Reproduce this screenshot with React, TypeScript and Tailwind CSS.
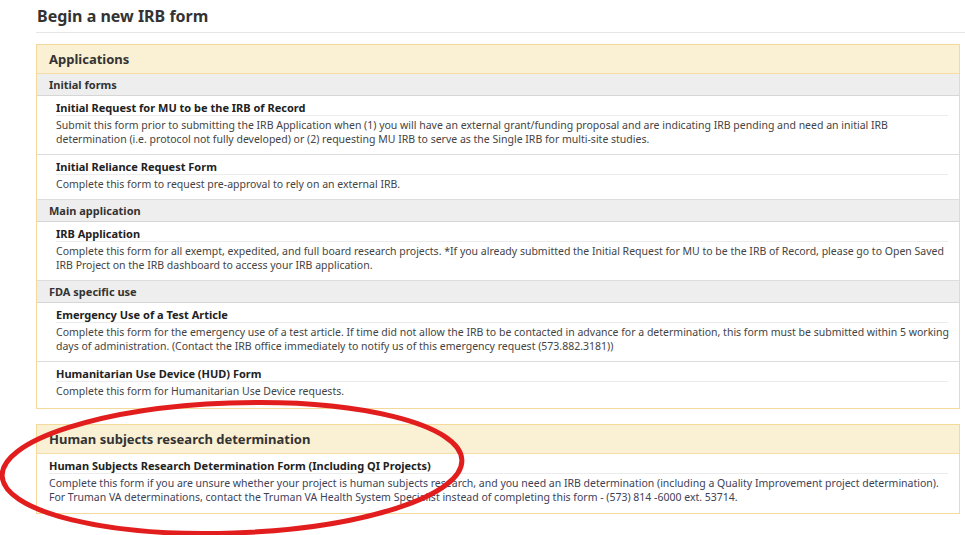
import React from "react";

type Item = { title: string; desc: React.ReactNode; last?: boolean };

function SubHeader({ children }: { children: React.ReactNode }) {
  return (
    <div className="h-[22px] bg-[#eeeeee] border-b border-[#d6d6d6] pl-[12px] text-[11px] font-bold leading-[21px] text-[#333]">
      {children}
    </div>
  );
}

function FormItem({ title, desc, last }: Item) {
  return (
    <div className={`pl-[19px] pr-[11px] pt-[5px] ${last ? "pb-[10px]" : "pb-[8px] border-b border-[#dddddd]"}`}>
      <div className="text-[11px] font-bold leading-[14px] text-[#222] border-b border-[#ececec]">{title}</div>
      <div className="mt-[2px] mr-[-6px] text-[10.5px] leading-[14px] text-[#444]">{desc}</div>
    </div>
  );
}

export default function App() {
  return (
    <div className="relative w-[965px] h-[535px] overflow-hidden bg-white font-['Noto_Sans','Open_Sans',sans-serif] text-[#333]">
      <div className="pl-[36px]">
        <h1 className="pl-[1px] pt-[6px] pb-[6px] text-[16px] font-bold leading-[20px] text-[#333] border-b border-[#e6e6e6]">
          Begin a new IRB form
        </h1>

        <div className="mt-[11px] mr-[5px] border border-[#f4da9a]">
          <div className="h-[29px] bg-[#faf0d3] border-b border-[#f4dea6] pl-[12px] text-[13px] font-bold leading-[28px] text-[#333]">
            Applications
          </div>
          <SubHeader>Initial forms</SubHeader>
          <FormItem
            title="Initial Request for MU to be the IRB of Record"
            desc="Submit this form prior to submitting the IRB Application when (1) you will have an external grant/funding proposal and are indicating IRB pending and need an initial IRB determination (i.e. protocol not fully developed) or (2) requesting MU IRB to serve as the Single IRB for multi-site studies."
          />
          <FormItem
            title="Initial Reliance Request Form"
            desc="Complete this form to request pre-approval to rely on an external IRB."
          />
          <SubHeader>Main application</SubHeader>
          <FormItem
            title="IRB Application"
            desc="Complete this form for all exempt, expedited, and full board research projects. *If you already submitted the Initial Request for MU to be the IRB of Record, please go to Open Saved IRB Project on the IRB dashboard to access your IRB application."
          />
          <SubHeader>FDA specific use</SubHeader>
          <FormItem
            title="Emergency Use of a Test Article"
            desc="Complete this form for the emergency use of a test article. If time did not allow the IRB to be contacted in advance for a determination, this form must be submitted within 5 working days of administration. (Contact the IRB office immediately to notify us of this emergency request (573.882.3181))"
          />
          <FormItem
            title="Humanitarian Use Device (HUD) Form"
            desc="Complete this form for Humanitarian Use Device requests."
            last
          />
        </div>

        <div className="mt-[15px] mr-[5px] border border-[#f4da9a]">
          <div className="h-[29px] bg-[#faf0d3] border-b border-[#f4dea6] pl-[12px] text-[13px] font-bold leading-[28px] text-[#333]">
            Human subjects research determination
          </div>
          <div className="pl-[12px] pr-[11px] pt-[5px] pb-[9px]">
            <div className="text-[11px] font-bold leading-[14px] text-[#222] border-b border-[#ececec]">
              Human Subjects Research Determination Form (Including QI Projects)
            </div>
            <div className="mt-[2px] text-[10.5px] leading-[14px] text-[#3d4257]">
              Complete this form if you are unsure whether your project is human subjects research, and you need an IRB determination (including a Quality Improvement project determination). For Truman VA determinations, contact the Truman VA Health System Specialist instead of completing this form - (573) 814 -6000 ext. 53714.
            </div>
          </div>
        </div>
      </div>

      <svg
        className="absolute left-0 top-0 pointer-events-none"
        width="965"
        height="535"
        viewBox="0 0 965 535"
      >
        <ellipse
          cx="232"
          cy="468"
          rx="230"
          ry="65"
          fill="none"
          stroke="#e21d1d"
          strokeWidth="5"
          transform="rotate(-2 232 468)"
        />
      </svg>
    </div>
  );
}
